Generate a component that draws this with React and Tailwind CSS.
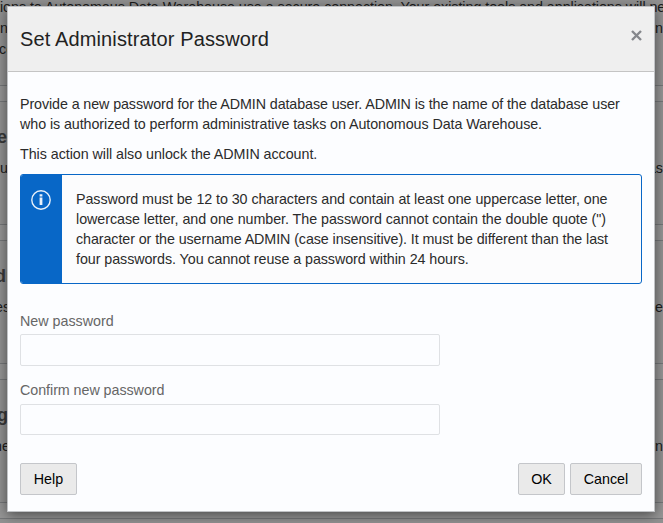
const CARDS = [
  { heading: "es", left: "u", right: "as", headingShift: "-ml-[3px]", leftShift: "ml-[0px]" },
  { heading: "dr", left: "es", right: "se", headingShift: "-ml-[5px]", leftShift: "-ml-[5px]" },
  { heading: "g", left: "ne", right: "rn", headingShift: "-ml-[3px]", leftShift: "-ml-[6px]" },
];

function BackgroundPage() {
  return (
    <div className="flex h-[523px] w-[663px] flex-col gap-[15px] overflow-hidden bg-[#969696] text-[14.3px] leading-[21px] text-[#1c1c1c]">
      <div className="h-[86px] shrink-0 border-b border-[#757779] bg-[#929292]">
        <div className="-mt-[3px] -ml-[4px] whitespace-nowrap tracking-[-0.04px]">
          tions to Autonomous Data Warehouse use a secure connection. Your existing tools and applications will ne
        </div>
        <div className="flex justify-between">
          <span>n</span>
          <span>n</span>
        </div>
        <div className="-ml-[1px]">co</div>
      </div>
      {CARDS.map((c) => (
        <div key={c.heading} className="h-[124px] shrink-0 border-y border-[#757779] bg-[#929292] pt-[25px]">
          <div className={`text-[18px] leading-[20px] font-bold text-[#3a3a3a] ${c.headingShift}`}>{c.heading}</div>
          <div className="mt-[11px] flex justify-between">
            <span className={c.leftShift}>{c.left}</span>
            <span>{c.right}</span>
          </div>
        </div>
      ))}
      <div className="h-[20px] shrink-0 border-t border-[#757779] bg-[#929292]" />
    </div>
  );
}

function InfoIcon() {
  return (
    <svg width="20" height="20" viewBox="0 0 20 20" fill="none" stroke="#e8f1fa">
      <circle cx="10" cy="10" r="9.2" strokeWidth="1.4" />
      <path d="M10 7.6V15" strokeWidth="2.8" />
      <path d="M10 4.2V6.4" strokeWidth="2.8" />
    </svg>
  );
}

function Button({ className, children }) {
  return (
    <button className={`h-[32px] rounded-[2px] border border-[#c4c6ca] bg-[#eaeaea] text-[14.3px] text-black ${className}`}>
      {children}
    </button>
  );
}

function Dialog() {
  return (
    <div className="absolute top-[6px] left-[7px] flex h-[506px] w-[648px] flex-col border border-[#c0c2c5] bg-[#fcfdff] text-[14.3px] leading-[20px] text-[#2b2b2b] shadow-[0_3px_12px_rgba(0,0,0,0.5)]">
      <header className="flex h-[65px] shrink-0 items-center justify-between border-b border-[#c4c4c4] bg-[#efefef] pr-[12px] pl-[12px]">
        <h1 className="text-[20px] leading-[24px] tracking-[0.13px] whitespace-nowrap text-[#222]">Set Administrator Password</h1>
        <svg className="-mt-[8px]" width="11" height="11" viewBox="0 0 11 11" stroke="#85878c" strokeWidth="2.4">
          <path d="M1 1L10 10M10 1L1 10" />
        </svg>
      </header>
      <main className="flex flex-1 flex-col px-[12px] pt-[22px]">
        <p className="whitespace-nowrap">
          <span className="tracking-[-0.1px]">
            Provide a new password for the ADMIN database user. ADMIN is the name of the database user
          </span>
          <br />
          <span className="tracking-[-0.075px]">
            who is authorized to perform administrative tasks on Autonomous Data Warehouse.
          </span>
        </p>
        <p className="mt-[10px] tracking-[-0.05px]">This action will also unlock the ADMIN account.</p>
        <div className="mt-[10px] flex h-[110px] w-[622px] overflow-hidden rounded-[3px] border border-[#0867c7] bg-[#fcfcfd]">
          <div className="flex w-[41px] shrink-0 justify-center bg-[#0867c7] pt-[15px] pr-[1px]">
            <InfoIcon />
          </div>
          <p className="pt-[14px] pl-[14px] whitespace-nowrap">
            <span className="tracking-[-0.07px]">
              Password must be 12 to 30 characters and contain at least one uppercase letter, one
            </span>
            <br />
            <span className="tracking-[-0.05px]">
              lowercase letter, and one number. The password cannot contain the double quote (")
            </span>
            <br />
            <span className="tracking-[-0.085px]">
              character or the username ADMIN (case insensitive). It must be different than the last
            </span>
            <br />
            <span className="tracking-[-0.065px]">four passwords. You cannot reuse a password within 24 hours.</span>
          </p>
        </div>
        <label className="mt-[27px] text-[#666]">New password</label>
        <input type="password" className="mt-[3px] h-[32px] w-[420px] rounded-[2px] border border-[#dfe1e4] bg-[#fcfdff]" />
        <label className="mt-[14px] tracking-[-0.05px] text-[#666]">Confirm new password</label>
        <input type="password" className="mt-[4px] h-[31px] w-[420px] rounded-[2px] border border-[#dfe1e4] bg-[#fcfdff]" />
        <footer className="mt-[28px] flex w-[622px]">
          <Button className="w-[57px]">Help</Button>
          <Button className="ml-auto w-[47px]">OK</Button>
          <Button className="ml-[5px] w-[72px]">Cancel</Button>
        </footer>
      </main>
    </div>
  );
}

export default function App() {
  return (
    <div className="relative h-[523px] w-[663px] overflow-hidden font-['Liberation_Sans',Arial,sans-serif]">
      <BackgroundPage />
      <Dialog />
    </div>
  );
}
